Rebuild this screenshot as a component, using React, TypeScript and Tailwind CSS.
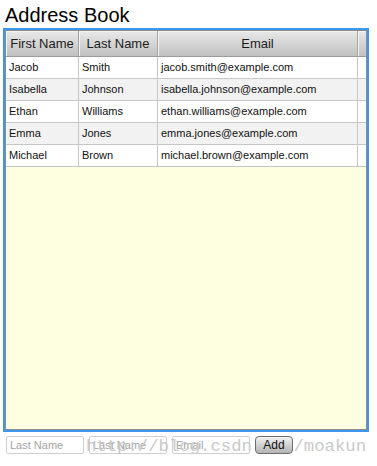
import React from "react";

/* ── data ─────────────────────────────────────────────── */

interface Person {
  first: string;
  last: string;
  email: string;
}

const PEOPLE: Person[] = [
  { first: "Jacob", last: "Smith", email: "jacob.smith@example.com" },
  { first: "Isabella", last: "Johnson", email: "isabella.johnson@example.com" },
  { first: "Ethan", last: "Williams", email: "ethan.williams@example.com" },
  { first: "Emma", last: "Jones", email: "emma.jones@example.com" },
  { first: "Michael", last: "Brown", email: "michael.brown@example.com" },
];

const COLS = "grid grid-cols-[73px_79px_200px_8px]";
const FONT = "font-['Liberation_Sans',Arial,sans-serif]";

/* ── pieces ───────────────────────────────────────────── */

function HeaderCell({ label, last }: { label?: string; last?: boolean }) {
  return (
    <div
      className={`flex items-center justify-center bg-linear-to-b from-[#e9e9e9] to-[#c1c1c1] text-[13px] text-[#1c1c1c] shadow-[inset_1px_1px_0_#f4f4f4] ${
        last ? "" : "border-r border-[#a3a3a3]"
      }`}
    >
      {label}
    </div>
  );
}

function Row({ p, odd }: { p: Person; odd: boolean }) {
  const bg = odd ? "bg-[#f2f2f2]" : "bg-white";
  const cell = "border-r border-[#c6c6c6] pl-[3px] leading-[21px] truncate";
  return (
    <div className={`${COLS} h-[22px] border-b border-[#c6c6c6] ${bg} text-[11px] text-[#111]`}>
      <div className={cell}>{p.first}</div>
      <div className={cell}>{p.last}</div>
      <div className={cell}>{p.email}</div>
      <div />
    </div>
  );
}

function Field({ placeholder }: { placeholder: string }) {
  return (
    <input
      placeholder={placeholder}
      className="h-[18px] w-[78px] rounded-[2px] border border-[#cfcfcf] bg-transparent px-[3px] text-[11px] text-[#333] outline-none placeholder:text-[#a4a4a4]"
    />
  );
}

/* ── page ─────────────────────────────────────────────── */

export default function App() {
  return (
    <div className={`h-[466px] w-[377px] bg-white ${FONT}`}>
      <h1 className="pl-[5px] pt-[3px] text-[20px] leading-[24px] text-black">Address Book</h1>

      {/* table */}
      <div className="mt-[1px] ml-[3px] h-[404px] w-[366px] border-2 border-[#3d98ec]">
        <div className="flex h-full flex-col border border-[#8c8c8c]">
          <div className={`${COLS} h-[26px] border-b border-[#9c9c9c]`}>
            <HeaderCell label="First Name" />
            <HeaderCell label="Last Name" />
            <HeaderCell label="Email" />
            <HeaderCell last />
          </div>
          {PEOPLE.map((p, i) => (
            <Row key={p.email} p={p} odd={i % 2 === 1} />
          ))}
          <div className="flex-1 bg-[#fefee0]" />
        </div>
      </div>

      {/* add form */}
      <div className="relative flex items-center gap-[5px] pl-[6px] pt-[4px]">
        <Field placeholder="Last Name" />
        <Field placeholder="Last Name" />
        <Field placeholder="Email" />
        <button className="relative z-10 h-[18px] w-[38px] rounded-[4px] border border-[#6e6e6e] bg-linear-to-b from-[#f2f2f2] to-[#b3b3b3] text-[12px] leading-[16px] text-[#111]">
          Add
        </button>
        <span className="pointer-events-none absolute left-[86px] top-[5px] whitespace-nowrap font-['Liberation_Mono','Courier_New',monospace] text-[17.3px] leading-[20px] text-[#c9c9c9]">
          http://blog.csdn.net/moakun
        </span>
      </div>
    </div>
  );
}
